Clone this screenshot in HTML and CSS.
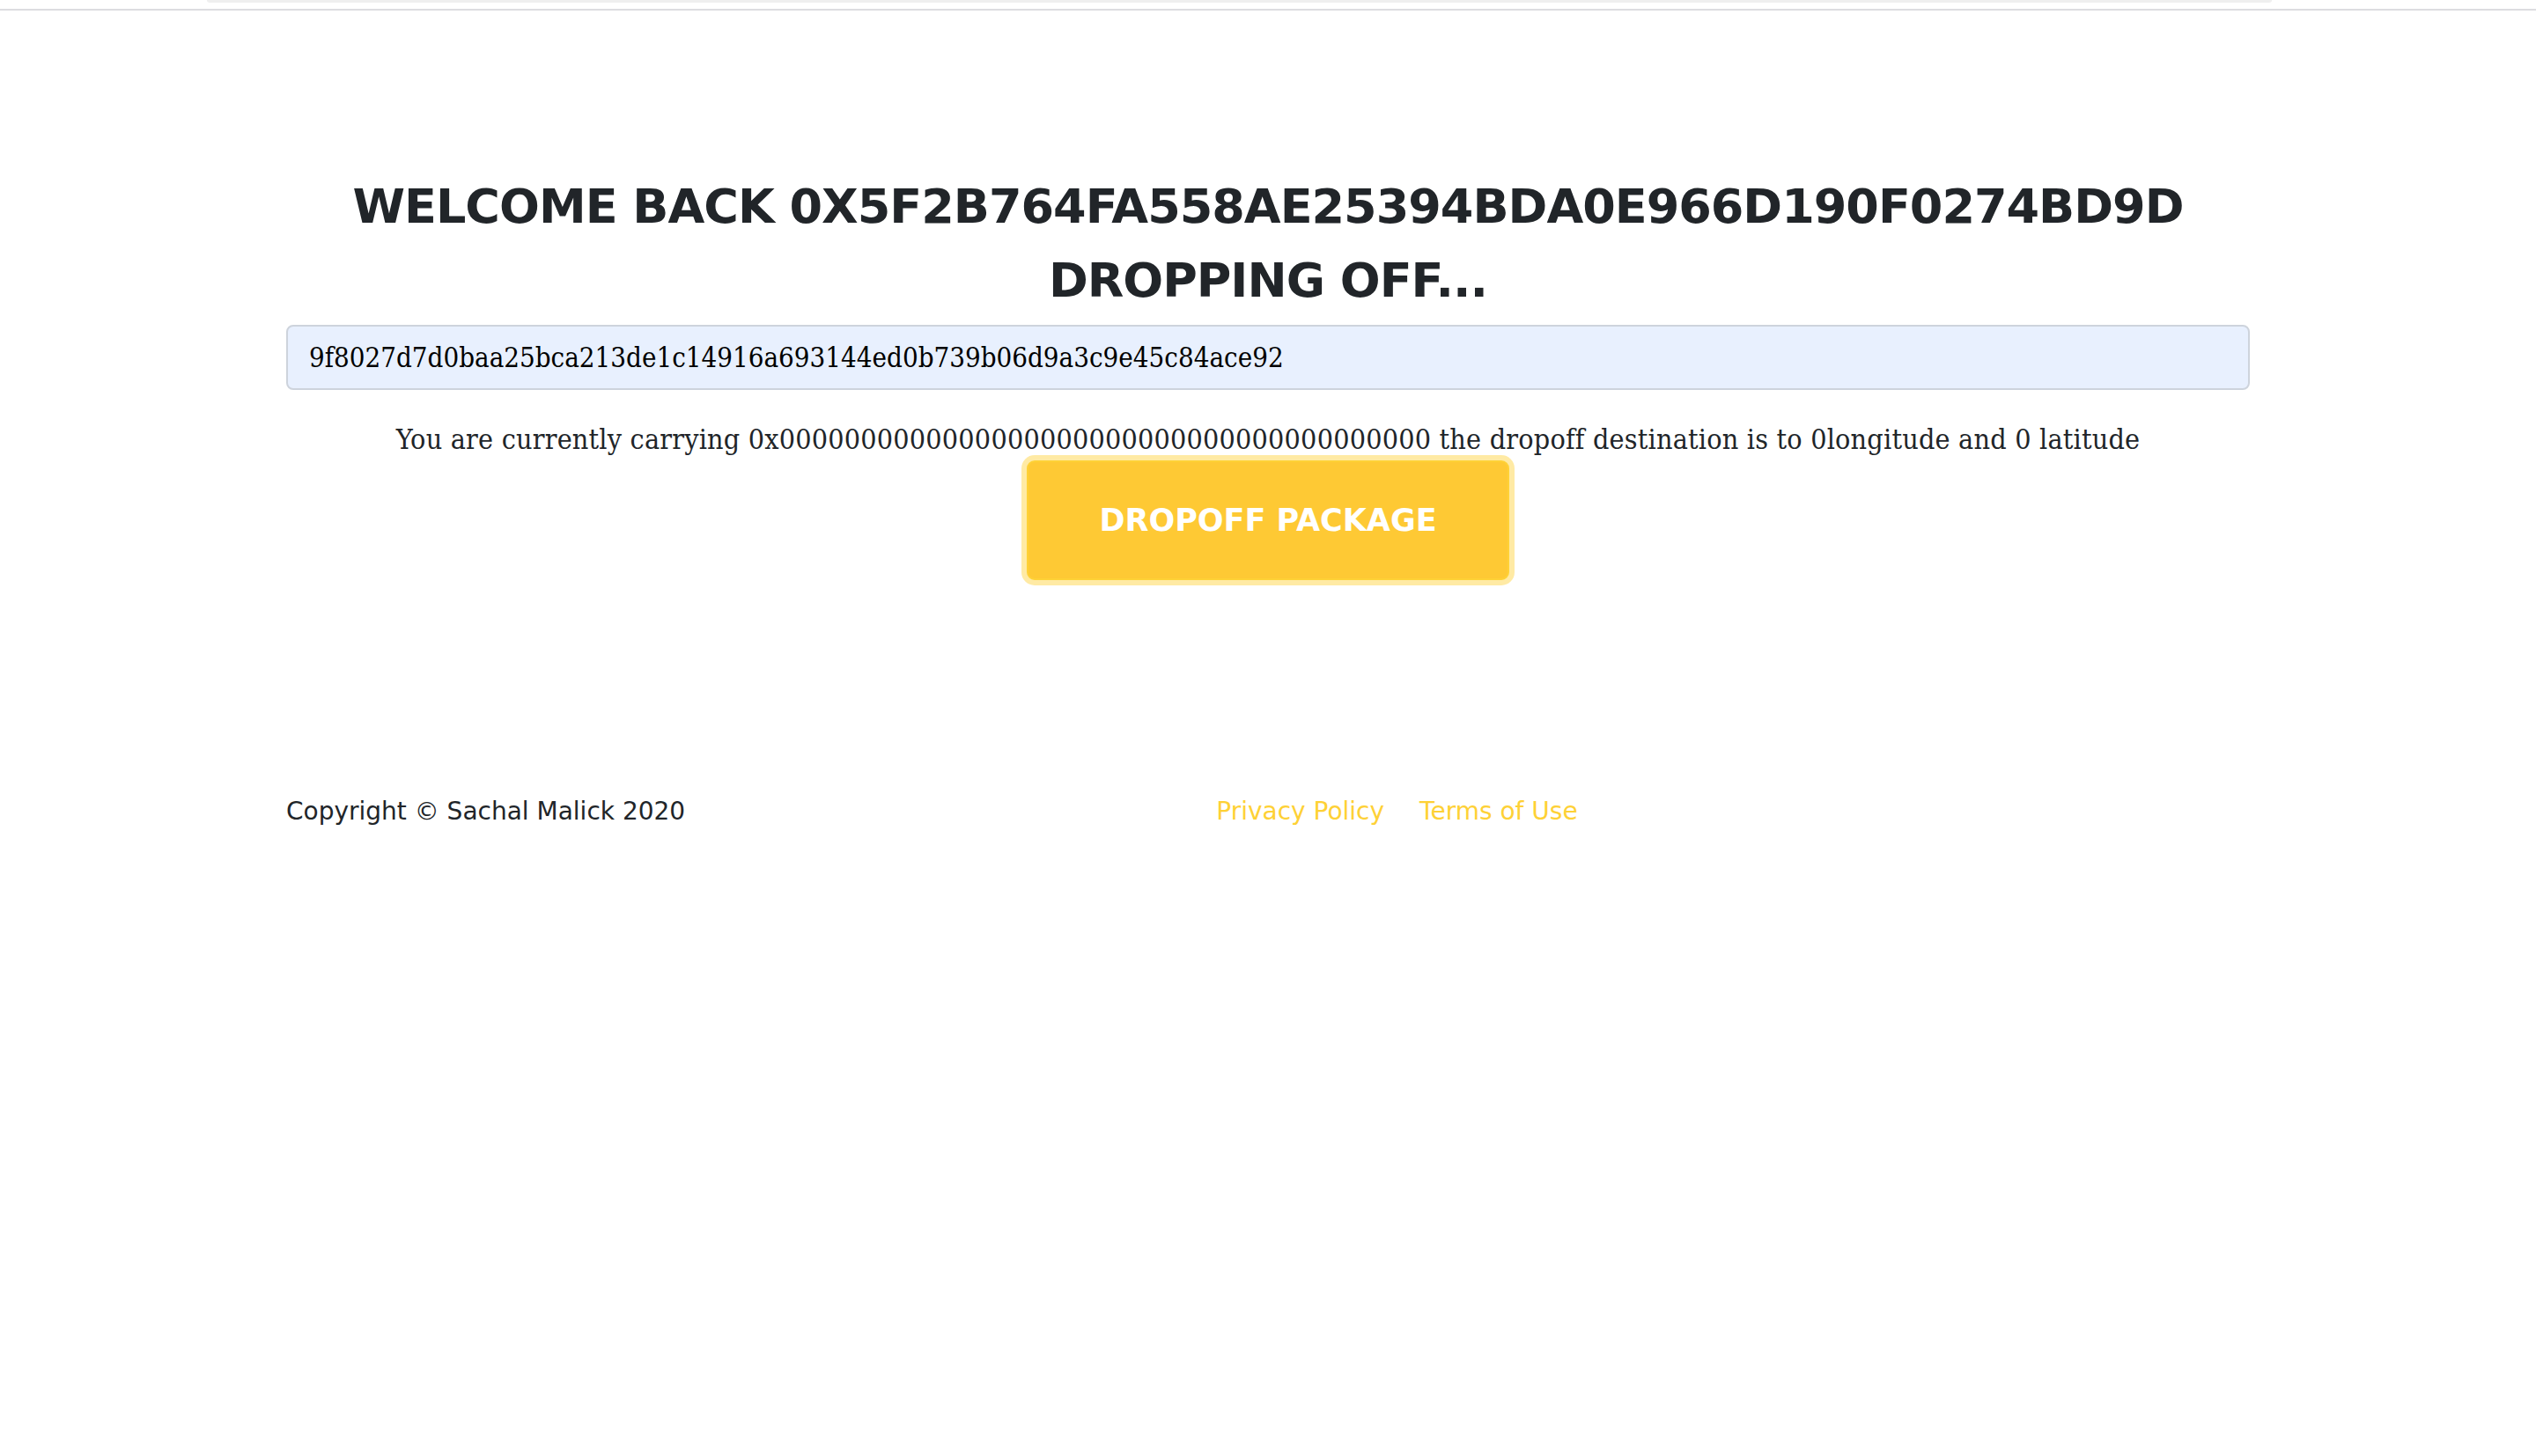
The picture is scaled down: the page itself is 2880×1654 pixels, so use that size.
FILE: index.html
```html
<!DOCTYPE html>
<html lang="en">
<head>
<meta charset="utf-8">
<title>Dropping off</title>
<link rel="stylesheet" href="styles.css">
</head>
<body>
<header class="topbar"><div class="topbar-tab"></div></header>
<section class="page">
  <div class="container">
    <h3 class="heading">Welcome back 0x5f2b764fa558ae25394bda0e966d190f0274bd9d</h3>
    <h3 class="heading">Dropping off...</h3>
    <form class="drop-form">
      <input class="field" type="text" value="9f8027d7d0baa25bca213de1c14916a693144ed0b739b06d9a3c9e45c84ace92">
      <p class="info">You are currently carrying 0x0000000000000000000000000000000000000000 the dropoff destination is to 0longitude and 0 latitude</p>
      <div class="actions"><button class="btn-drop" type="button">Dropoff Package</button></div>
    </form>
  </div>
</section>
<footer class="footer">
  <div class="container footer-row">
    <div class="copyright">Copyright © Sachal Malick 2020</div>
    <ul class="quicklinks">
      <li><a href="#">Privacy Policy</a></li>
      <li><a href="#">Terms of Use</a></li>
    </ul>
    <div class="spacer"></div>
  </div>
</footer>
</body>
</html>
```
FILE: styles.css
```css
html, body {
  margin: 0;
  padding: 0;
  background: #ffffff;
}
body {
  font-family: "DejaVu Serif Condensed", "DejaVu Serif", serif;
  font-size: 31px;
  line-height: 48px;
  color: #212529;
}
.topbar {
  height: 10px;
  border-bottom: 2px solid #dcdce0;
}
.topbar-tab {
  margin: 0 300px 0 235px;
  height: 3px;
  background: #efefef;
  border-radius: 0 0 6px 6px;
}
.container {
  width: 2230px;
  margin: 0 auto;
}
.page {
  padding: 189px 0 0;
}
.heading {
  margin: 0 0 17px;
  text-align: center;
  font-family: "DejaVu Sans", sans-serif;
  font-weight: 700;
  font-size: 54px;
  line-height: 67px;
  letter-spacing: -1px;
  text-transform: uppercase;
  color: #212529;
}
.drop-form {
  margin: 0;
}
.field {
  display: block;
  box-sizing: border-box;
  width: 100%;
  height: 74px;
  margin: 0;
  padding: 0 24px;
  border: 2px solid #cdd3dc;
  border-radius: 8px;
  background: #e8f0fe;
  font-family: "DejaVu Serif Condensed", "DejaVu Serif", serif;
  font-size: 31px;
  color: #000000;
  outline: none;
}
.info {
  margin: 32px 0 0;
  text-align: center;
  font-size: 32px;
  letter-spacing: 0.2px;
  line-height: 48px;
}
.actions {
  display: flex;
  justify-content: center;
}
.btn-drop {
  box-sizing: border-box;
  padding: 40px 80px;
  border: 2px solid #fed136;
  border-radius: 9px;
  background: #fec934;
  color: #ffffff;
  font-family: "DejaVu Sans", sans-serif;
  font-weight: 700;
  font-size: 35px;
  line-height: 52px;
  text-transform: uppercase;
  box-shadow: 0 0 0 6px rgba(254, 209, 54, 0.45);
  cursor: pointer;
}
.footer {
  padding: 223px 0 50px;
}
.footer-row {
  display: grid;
  grid-template-columns: 1fr 1fr 1fr;
  column-gap: 60px;
  align-items: center;
}
.copyright {
  font-family: "DejaVu Sans", sans-serif;
  font-size: 28px;
  line-height: 80px;
  color: #212529;
}
.quicklinks {
  display: flex;
  justify-content: flex-end;
  gap: 40px;
  margin: 0;
  padding: 0;
  list-style: none;
  font-family: "DejaVu Sans", sans-serif;
  font-size: 28px;
  line-height: 80px;
}
.quicklinks a {
  color: #fed136;
  text-decoration: none;
}
```
